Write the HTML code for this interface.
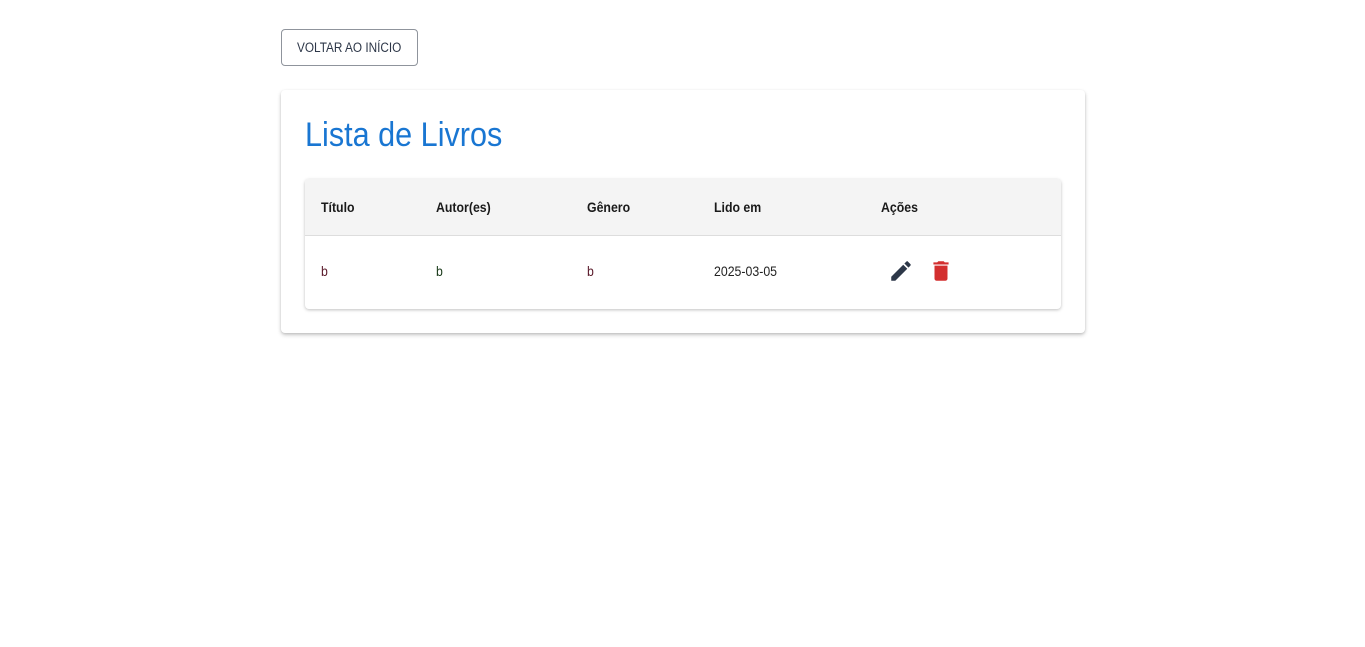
<!DOCTYPE html>
<html><head><meta charset="utf-8"><style>
body{margin:0;background:#fff;font-family:"Liberation Sans",sans-serif;}
.n{display:inline-block;transform:scaleX(0.88);transform-origin:left center;white-space:nowrap;}
.btn{position:absolute;left:281px;top:29px;width:135px;height:35px;border:1px solid #8f949c;border-radius:4px;font-size:13.4px;color:#2d3748;}
.btn .n{position:absolute;left:15px;top:10px;}
.card{position:absolute;left:281px;top:90px;width:804px;height:243px;background:#fff;border-radius:4px;box-shadow:0 2px 4px rgba(0,0,0,.2),0 1px 2px rgba(0,0,0,.1);}
h1{position:absolute;left:24px;top:25px;margin:0;font-weight:400;font-size:34px;color:#1976d2;line-height:40px;}
h1 .n{transform:scaleX(0.9);}
.tbl{position:absolute;left:24px;top:89px;width:756px;height:130px;border-radius:4px;box-shadow:0 1px 3px rgba(0,0,0,.25);overflow:hidden;}
.hd{height:56px;background:#f4f4f4;border-bottom:1px solid #ddd;position:relative;}
.row{height:73px;position:relative;}
.c{position:absolute;top:0;line-height:56px;font-size:14px;}
.hd .c{font-weight:bold;color:#1a1a1a;}
.row .c{line-height:70px;color:#222;}
svg{position:absolute;}
</style></head><body>
<div class="btn"><span class="n">VOLTAR AO INÍCIO</span></div>
<div class="card">
<h1><span class="n">Lista de Livros</span></h1>
<div class="tbl">
<div class="hd"><span class="c n" style="left:16px">Título</span><span class="c n" style="left:131px">Autor(es)</span><span class="c n" style="left:282px">Gênero</span><span class="c n" style="left:409px">Lido em</span><span class="c n" style="left:576px">Ações</span></div>
<div class="row"><span class="c n" style="left:16px;color:#5a1a2a">b</span><span class="c n" style="left:131px;color:#1a3a1a">b</span><span class="c n" style="left:282px;color:#5a1a2a">b</span><span class="c n" style="left:409px">2025-03-05</span>
<svg style="left:583px;top:22px" width="26" height="26" viewBox="0 0 24 24"><path fill="#2d3748" d="M3 17.25V21h3.75L17.81 9.94l-3.75-3.75L3 17.25zM20.71 7.04a1 1 0 000-1.41l-2.34-2.34a1 1 0 00-1.41 0l-1.83 1.83 3.75 3.75 1.83-1.83z"/></svg>
<svg style="left:623px;top:22px" width="26" height="26" viewBox="0 0 24 24"><path fill="#d32f2f" d="M6 19c0 1.1.9 2 2 2h8c1.1 0 2-.9 2-2V7H6v12zM19 4h-3.5l-1-1h-5l-1 1H5v2h14V4z"/></svg>
</div>
</div>
</div>
</body></html>
